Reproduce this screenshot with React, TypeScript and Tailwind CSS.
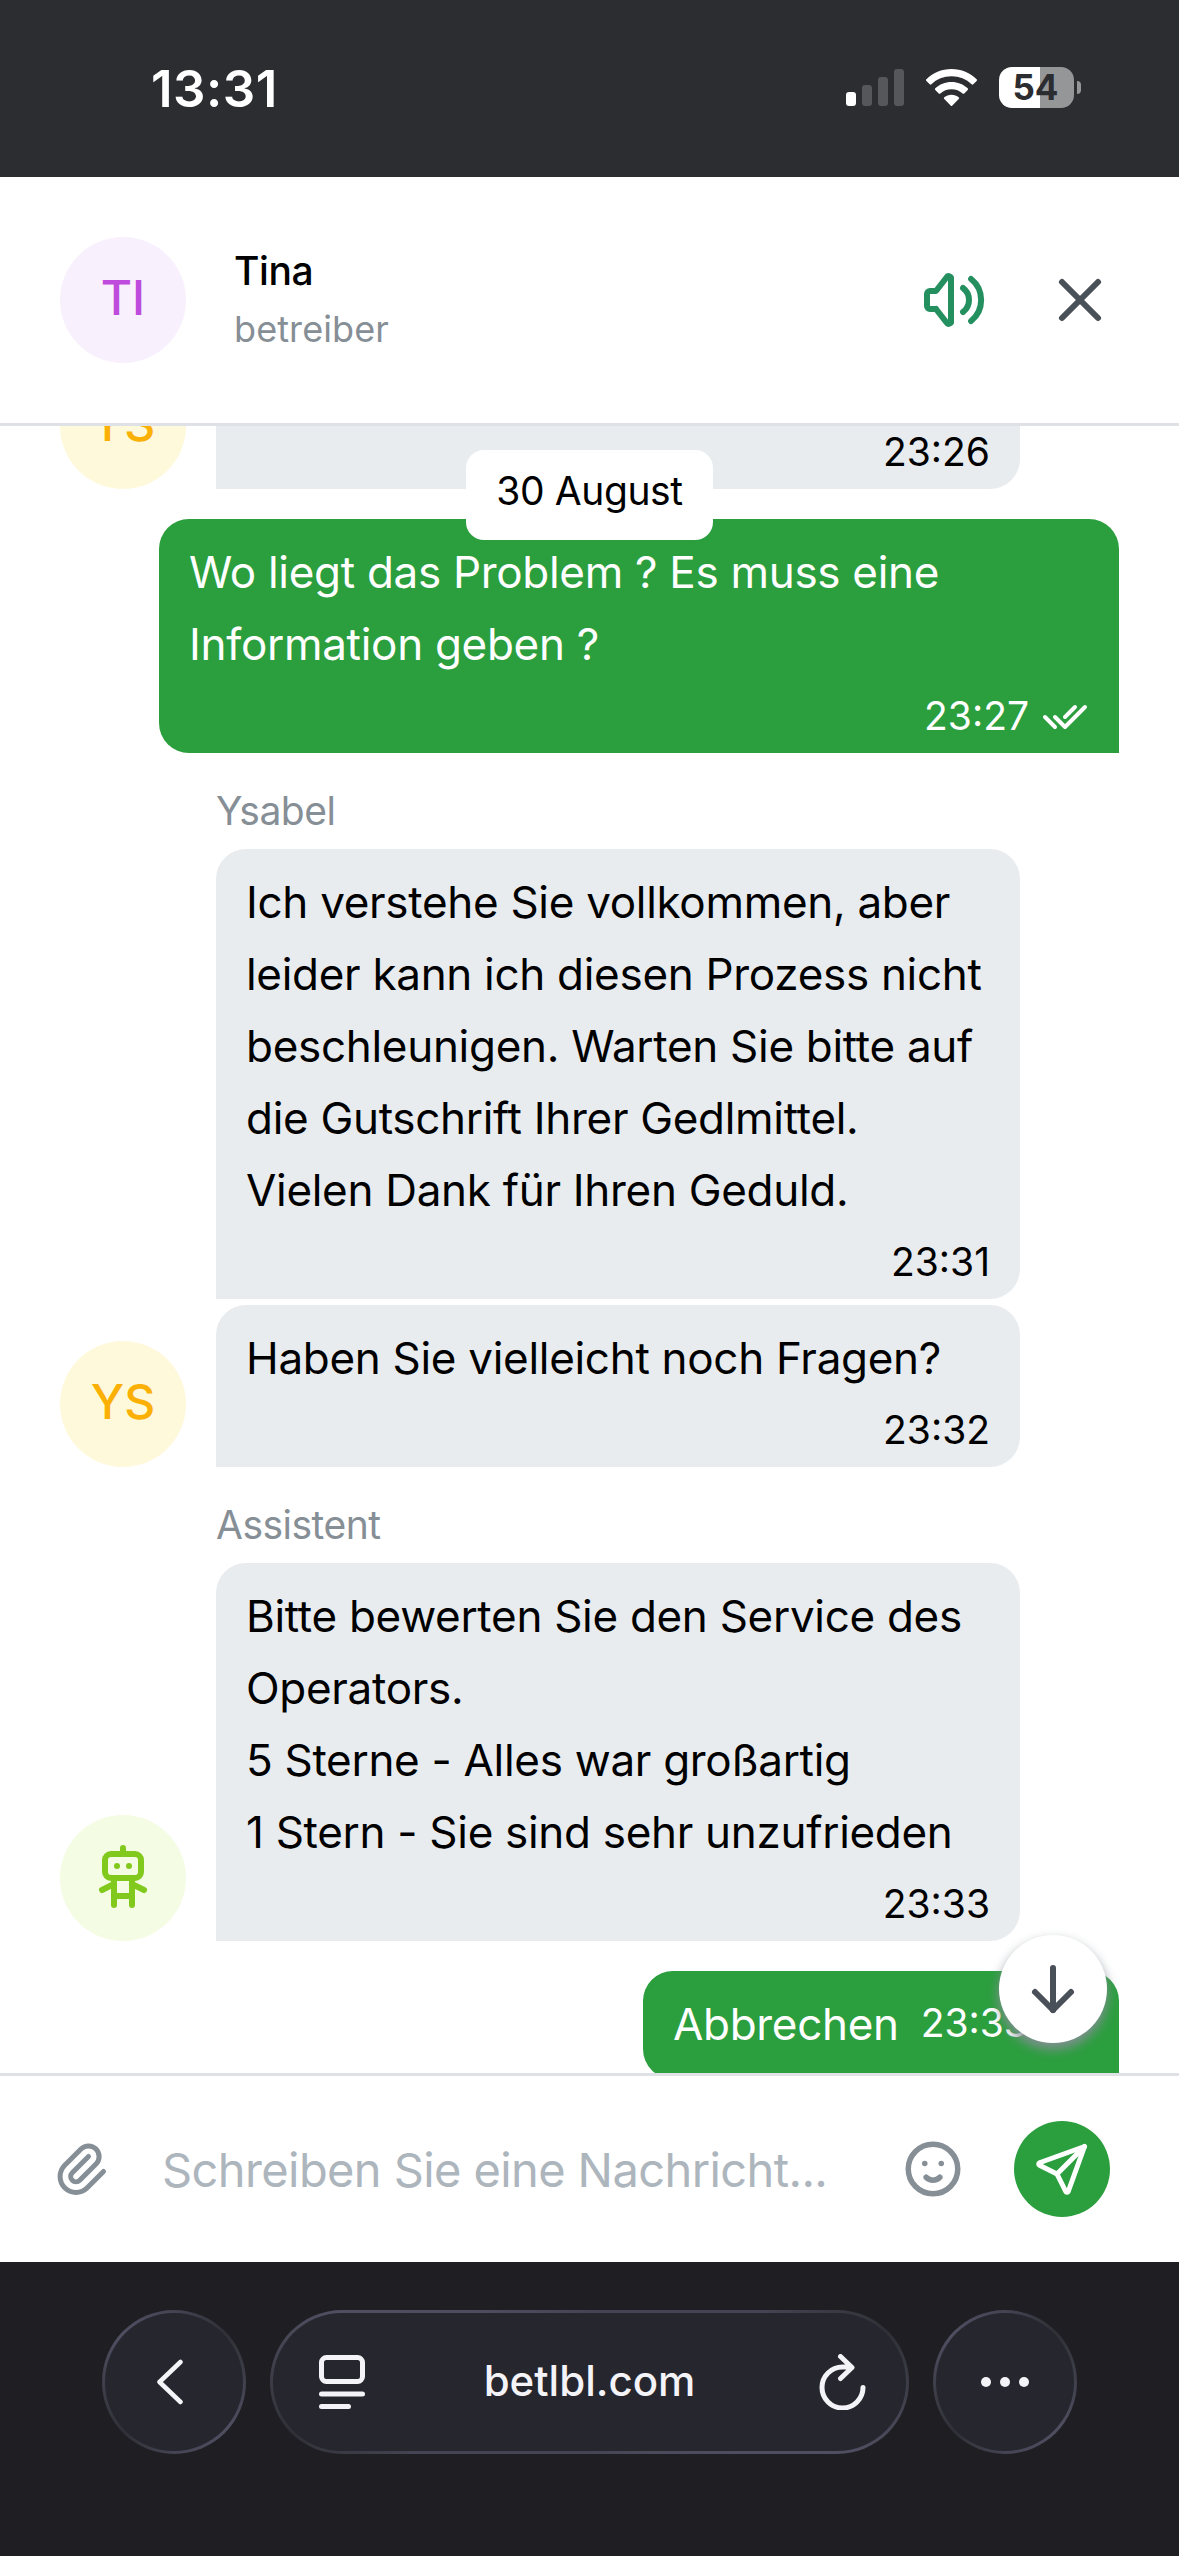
import type { ReactNode } from "react";
import {
  TbArrowDown,
  TbChecks,
  TbMoodSmile,
  TbPaperclip,
  TbRobot,
  TbSend,
  TbVolume,
  TbX,
} from "react-icons/tb";

interface AvatarProps {
  className: string;
  children: ReactNode;
}

function Avatar({ className, children }: AvatarProps) {
  return (
    <div className={`flex size-[126px] shrink-0 items-center justify-center rounded-full text-[48px] font-medium ${className}`}>
      {children}
    </div>
  );
}

interface OperatorBubbleProps {
  lines: string[];
  time: string;
}

function OperatorBubble({ lines, time }: OperatorBubbleProps) {
  return (
    <div className="w-[804px] rounded-[30px] rounded-bl-none bg-[#e9ecef] px-[30px] pt-[17px] pb-[18px] text-black">
      {lines.map((line) => (
        <p key={line} className="text-[44px] leading-[72px] tracking-[-0.3px] whitespace-nowrap">
          {line}
        </p>
      ))}
      <div className="flex h-[55px] items-end justify-end text-[39px] leading-[38px]">{time}</div>
    </div>
  );
}

function SenderName({ children }: { children: ReactNode }) {
  return (
    <div className="ml-[216px] h-24 pt-[34px] text-[39px] leading-[48px] tracking-[-0.5px] text-[#868e96]">{children}</div>
  );
}

function StatusBar() {
  return (
    <div className="flex h-[177px] shrink-0 justify-between bg-[#2c2d31] pr-[98px] pl-[151px] text-white">
      <div className="pt-[58px] text-[51px] leading-[62px] font-semibold tracking-[0.5px]">13:31</div>
      <div className="flex items-start pt-[67px]">
        <svg className="mt-[2px] h-[37px] w-[58px]" viewBox="0 0 58 37" fill="#56575b">
          <rect x="0" y="23" width="10" height="14" rx="3" fill="#fff" />
          <rect x="16" y="16" width="10" height="21" rx="3" />
          <rect x="32" y="8" width="10" height="29" rx="3" />
          <rect x="48" y="0" width="10" height="37" rx="3" />
        </svg>
        <svg className="mt-[2px] ml-[22px] h-[37px] w-[51px]" viewBox="0 0 51 37" fill="#fff">
          <path d="M25.5 0C35.4 0 44.4 3.9 50.6 10.2a1.2 1.2 0 0 1 0 1.7l-3.3 3.3a1.2 1.2 0 0 1-1.7 0C40.4 10.3 33.3 7.3 25.5 7.3S10.6 10.3 5.4 15.2a1.2 1.2 0 0 1-1.7 0L.4 11.9a1.2 1.2 0 0 1 0-1.7C6.600 3.9 15.6 0 25.500 0z" />
          <path d="M25.5 13c6.3 0 12 2.4 16.2 6.3a1.2 1.2 0 0 1 0 1.7l-3.4 3.4a1.2 1.2 0 0 1-1.700 0c-2.9-2.6-6.8-4.2-11.1-4.200s-8.2 1.6-11.1 4.200a1.2 1.2 0 0 1-1.7 0L9.3 21a1.2 1.2 0 0 1 0-1.7C13.5 15.4 19.2 13 25.5 13z" />
          <path d="M25.5 25.7c2.8 0 5.3 1 7.2 2.6a1.2 1.2 0 0 1 0 1.7l-6.3 6.4a1.2 1.2 0 0 1-1.8 0L18.3 30a1.2 1.2 0 0 1 0-1.700c1.9-1.6 4.4-2.6 7.2-2.6z" />
        </svg>
        <div className="ml-[22px] flex h-[41px] w-[75px] items-center justify-center rounded-[13px] bg-[linear-gradient(to_right,#fff_41px,#959698_41px)] pr-[2px] text-[35px] leading-none font-bold text-[#2c2d31]">
          54
        </div>
        <div className="mt-[14px] ml-[3px] h-[13px] w-1 rounded-r-full bg-[#959698]" />
      </div>
    </div>
  );
}

function Header() {
  return (
    <header className="flex h-[249px] shrink-0 items-center border-b-[3px] border-[#dee2e6] bg-white pr-[63px] pl-[60px]">
      <Avatar className="bg-[#f8f0fc] pb-[5px] text-[#be4bdb]">TI</Avatar>
      <div className="ml-12 flex-1">
        <div className="text-[39px] leading-[58px] font-medium tracking-[-0.4px] text-black">Tina</div>
        <div className="text-[36px] leading-[58px] tracking-[0.1px] text-[#868e96]">betreiber</div>
      </div>
      <TbVolume className="size-[72px] text-[#248f5f]" />
      <TbX className="ml-[54px] size-[72px] text-[#495057]" />
    </header>
  );
}

function Messages() {
  return (
    <main className="relative h-[1647px] shrink-0 overflow-hidden bg-white">
      {/* tail of the previous message */}
      <div className="flex h-[63px] items-end pl-[60px]">
        <Avatar className="bg-[#fff9db] pb-[5px] text-[#fab005]">YS</Avatar>
        <div className="ml-[30px] flex h-[63px] w-[804px] items-end justify-end rounded-br-[30px] bg-[#e9ecef] px-[30px] pb-[18px] text-[39px] leading-[38px] text-black">
          23:26
        </div>
      </div>

      <div className="mt-[30px] flex justify-end pr-[60px]">
        <div className="w-[960px] rounded-[30px] rounded-br-none bg-[#2b9e3e] px-[30px] pt-[17px] pb-[18px] text-white">
          <p className="text-[44px] leading-[72px] tracking-[-0.3px]">
            Wo liegt das Problem ? Es muss eine
            <br />
            Information geben ?
          </p>
          <div className="flex h-[55px] items-end justify-end text-[39px] leading-[38px]">
            23:27
            <TbChecks className="-mb-[6px] ml-[12px] size-12" />
          </div>
        </div>
      </div>

      <SenderName>Ysabel</SenderName>
      <div className="flex items-end pl-[60px]">
        <Avatar className="bg-[#fff9db] pb-[5px] text-[#fab005]">YS</Avatar>
        <div className="ml-[30px] space-y-1.5">
          <OperatorBubble
            lines={[
              "Ich verstehe Sie vollkommen, aber",
              "leider kann ich diesen Prozess nicht",
              "beschleunigen. Warten Sie bitte auf",
              "die Gutschrift Ihrer Gedlmittel.",
              "Vielen Dank für Ihren Geduld.",
            ]}
            time="23:31"
          />
          <OperatorBubble lines={["Haben Sie vielleicht noch Fragen?"]} time="23:32" />
        </div>
      </div>

      <SenderName>Assistent</SenderName>
      <div className="flex items-end pl-[60px]">
        <Avatar className="bg-[#f4fce3] text-[#82c91e]">
          <TbRobot className="size-[72px]" />
        </Avatar>
        <div className="ml-[30px]">
          <OperatorBubble
            lines={[
              "Bitte bewerten Sie den Service des",
              "Operators.",
              "5 Sterne - Alles war großartig",
              "1 Stern - Sie sind sehr unzufrieden",
            ]}
            time="23:33"
          />
        </div>
      </div>

      <div className="mt-[30px] flex justify-end pr-[60px]">
        <div className="flex h-[108px] w-[476px] items-center rounded-[30px] rounded-br-none bg-[#2b9e3e] px-[30px] pb-[3px] text-white">
          <span className="text-[44px] leading-[72px] tracking-[-0.32px]">Abbrechen</span>
          <span className="ml-[22px] text-[39px]">23:33</span>
        </div>
      </div>

      {/* sticky date */}
      <div className="absolute top-6 left-[466px] flex h-[90px] w-[247px] items-center justify-center rounded-[18px] bg-white pb-[7px] text-[39px] tracking-[-0.4px] text-black">
        30 August
      </div>
      <button className="absolute top-[1509px] right-[72px] flex size-[108px] items-center justify-center rounded-full bg-white shadow-[0_6px_12px_#868e96]">
        <TbArrowDown className="size-[72px] text-[#495057]" />
      </button>
    </main>
  );
}

function Composer() {
  return (
    <div className="flex h-[189px] shrink-0 items-center border-t-[3px] border-[#dee2e6] bg-white pr-[69px] pl-[51px] text-[#868e96]">
      <TbPaperclip className="size-[60px]" />
      <div className="ml-[51px] flex-1 pt-[2px] text-[47px] tracking-[-0.6px] text-[#adb5bd]">
        Schreiben Sie eine Nachricht...
      </div>
      <TbMoodSmile className="size-[66px]" />
      <button className="ml-12 flex size-24 items-center justify-center rounded-full bg-[#2b9e3e] text-white">
        <TbSend className="size-[60px]" />
      </button>
    </div>
  );
}

function BrowserBar() {
  return (
    <div className="flex h-[294px] shrink-0 gap-6 bg-[#1f1e23] px-[102px] pt-12 text-[#f3f3f8]">
      <div className="size-36 rounded-full bg-[conic-gradient(#454454,#2f3036_45deg,#504f62_130deg,#454454_180deg,#2f3036_225deg,#504f62_310deg,#454454)] p-[3px]">
        <div className="flex size-full items-center justify-center rounded-full bg-[#26262e]">
          <svg className="mr-[9px] h-[46px] w-[28px]" viewBox="0 0 28 46" fill="none" stroke="currentColor" strokeWidth="4.5" strokeLinecap="round" strokeLinejoin="round">
            <path d="M24.5 3L3.5 23l21 20" />
          </svg>
        </div>
      </div>
      <div className="h-36 flex-1 rounded-full bg-[conic-gradient(#454454,#454454_68deg,#2f3036_80deg,#504f62_105deg,#454454_180deg,#454454_248deg,#2f3036_260deg,#504f62_285deg,#454454)] p-[3px]">
        <div className="flex size-full items-center rounded-full bg-[#26262e] pr-[40px] pl-[45px]">
          <svg className="h-[54px] w-[48px]" viewBox="0 0 48 54" fill="none" stroke="currentColor" strokeWidth="5" strokeLinecap="round">
            <rect x="3.5" y="2.5" width="41" height="24" rx="5" />
            <path d="M3.5 39h41M3.5 51.5h27" />
          </svg>
          <span className="flex-1 pr-[5px] pb-[3px] text-center text-[42px] font-medium">betlbl.com</span>
          <svg className="h-[56px] w-[48px]" viewBox="0 0 48 56" fill="none" stroke="currentColor" strokeWidth="5" strokeLinecap="round" strokeLinejoin="round">
            <path d="M33 13H24.5a20.5 20.5 0 1 0 20.5 20.5M22.5 2.5L34 13.5 22.5 24.5" />
          </svg>
        </div>
      </div>
      <div className="size-36 rounded-full bg-[conic-gradient(#454454,#2f3036_45deg,#504f62_130deg,#454454_180deg,#2f3036_225deg,#504f62_310deg,#454454)] p-[3px]">
        <div className="flex size-full items-center justify-center gap-[9px] rounded-full bg-[#26262e]">
          <span className="size-[10px] rounded-full bg-[#f3f3f8]" />
          <span className="size-[10px] rounded-full bg-[#f3f3f8]" />
          <span className="size-[10px] rounded-full bg-[#f3f3f8]" />
        </div>
      </div>
    </div>
  );
}

export default function App() {
  return (
    <div className="flex h-[2556px] w-[1179px] flex-col overflow-hidden bg-white font-['Inter','Liberation_Sans',sans-serif]">
      <StatusBar />
      <Header />
      <Messages />
      <Composer />
      <BrowserBar />
    </div>
  );
}
